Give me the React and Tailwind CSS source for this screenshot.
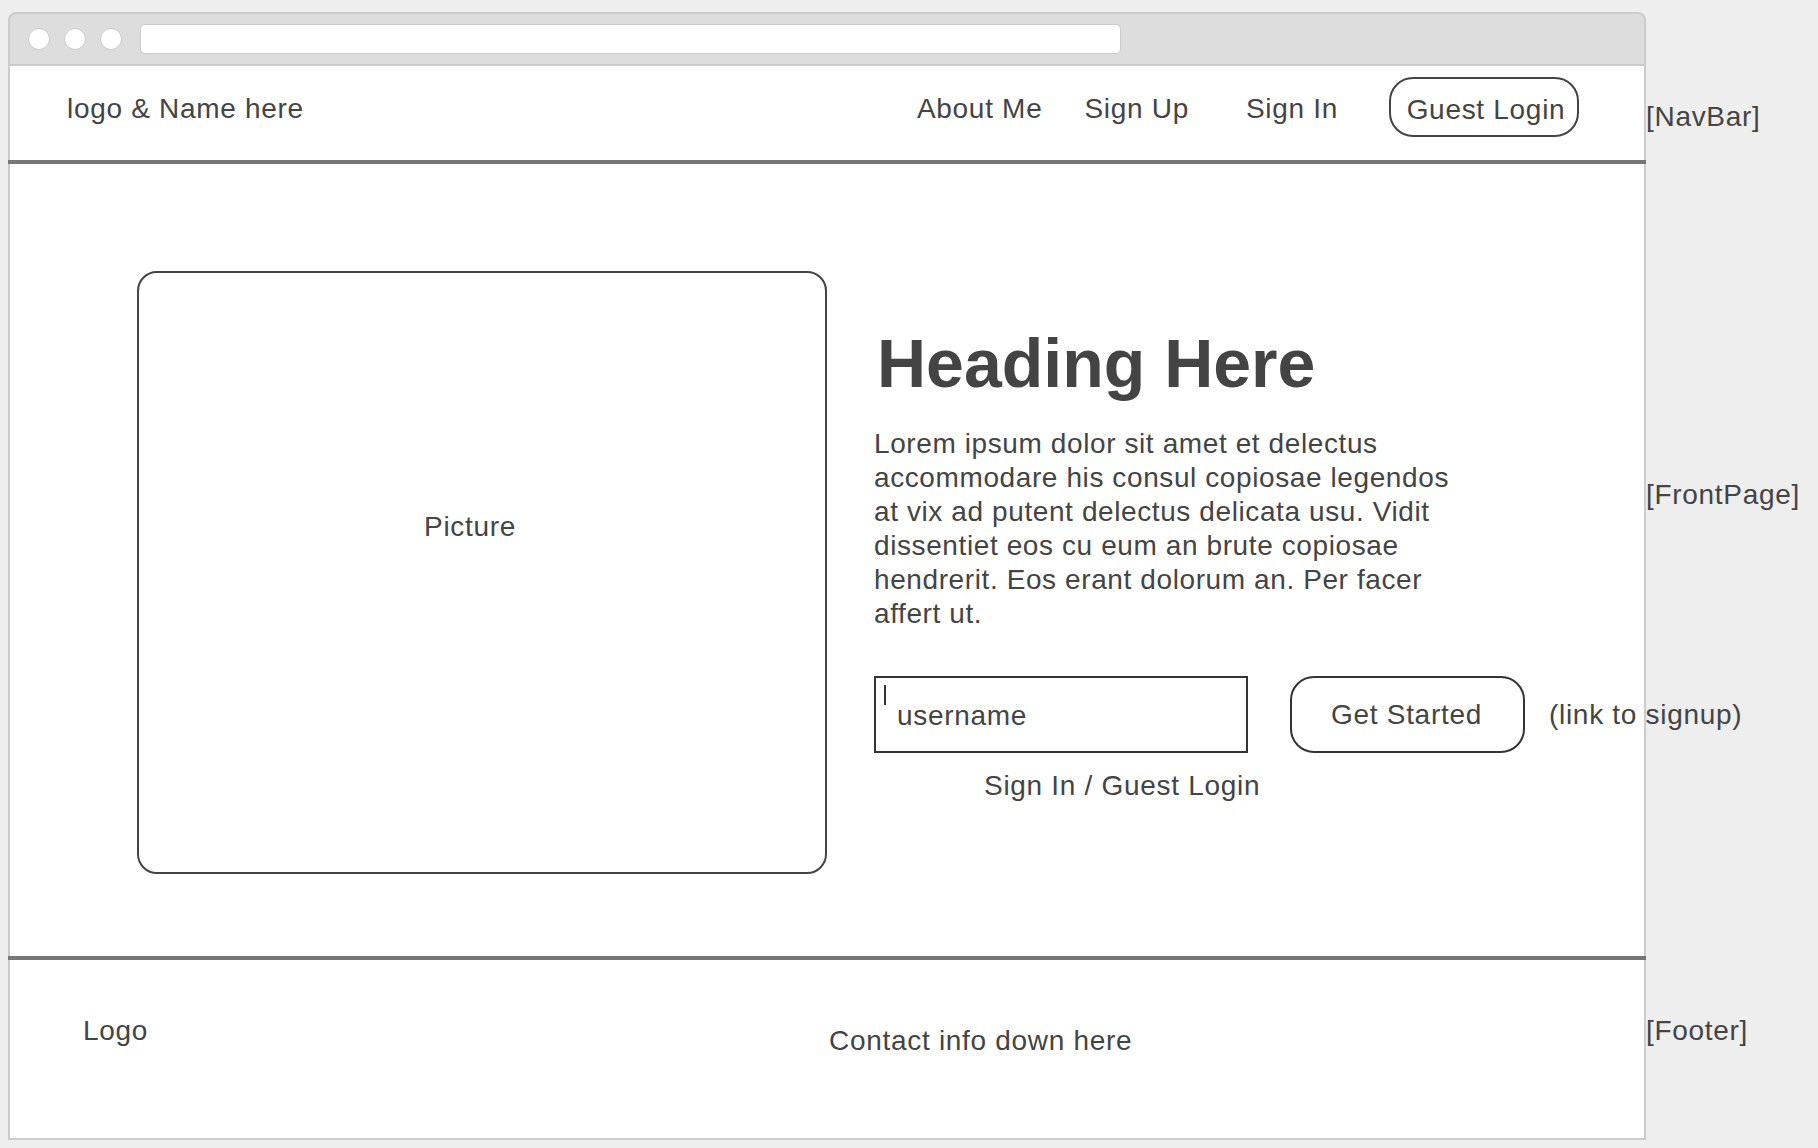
export default function App() {
  return (
    <div className="min-h-[1148px] bg-[#eeeeee] pt-[12px] pl-[8px] text-[#444] font-['Liberation_Sans',Arial,sans-serif]">
      <div className="grid grid-cols-[1638px_auto]">
        {/* Browser chrome */}
        <div className="h-[54px] border-2 border-[#cccccc] rounded-t-[8px] bg-[#dddddd] flex items-center pl-[18px]">
          <div className="w-[22px] h-[22px] rounded-full bg-white border border-[#cccccc]" />
          <div className="w-[22px] h-[22px] rounded-full bg-white border border-[#cccccc] ml-[14px]" />
          <div className="w-[22px] h-[22px] rounded-full bg-white border border-[#cccccc] ml-[14px]" />
          <div className="w-[981px] h-[30px] rounded-[5px] bg-white border border-[#cccccc] ml-[18px]" />
        </div>
        <div />

        {/* NavBar */}
        <div className="h-[94px] border-x-2 border-[#cccccc] bg-white flex items-start">
          <span className="ml-[57px] mt-[29px] text-[28px] leading-none tracking-[0.7px] whitespace-nowrap">
            logo &amp; Name here
          </span>
          <nav className="ml-auto pr-[65px] flex items-start">
            <a className="mt-[29px] text-[28px] leading-none tracking-[0.7px] whitespace-nowrap">About Me</a>
            <a className="ml-[42px] mt-[29px] text-[28px] leading-none tracking-[0.7px] whitespace-nowrap">Sign Up</a>
            <a className="ml-[57px] mt-[29px] text-[28px] leading-none tracking-[0.7px] whitespace-nowrap">Sign In</a>
            <button className="ml-[51px] mt-[11px] w-[190px] h-[60px] border-2 border-[#444] rounded-[24px] flex items-center justify-center pt-[5px] pl-[4px] text-[28px] leading-none tracking-[0.7px] whitespace-nowrap">
              Guest Login
            </button>
          </nav>
        </div>
        <div className="pt-[37px] text-[28px] leading-none tracking-[0.7px] whitespace-nowrap">[NavBar]</div>

        <div className="h-[4px] bg-[#777777]" />
        <div />

        {/* FrontPage */}
        <div className="h-[792px] border-x-2 border-[#cccccc] bg-white flex items-start">
          <div className="ml-[127px] mt-[107px] w-[690px] h-[603px] shrink-0 border-2 border-[#444] rounded-[20px] pt-[240px] pl-[285px]">
            <span className="text-[28px] leading-none tracking-[0.7px]">Picture</span>
          </div>
          <div className="ml-[47px] mt-[165px] flex flex-col items-start">
            <h1 className="ml-[3px] text-[68px] font-bold leading-none whitespace-nowrap">Heading Here</h1>
            <p className="mt-[30px] w-[590px] text-[28px] leading-[34px] tracking-[0.6px]">
              Lorem ipsum dolor sit amet et delectus accommodare his consul copiosae legendos at vix ad putent
              delectus delicata usu. Vidit dissentiet eos cu eum an brute copiosae hendrerit. Eos erant dolorum
              an. Per facer affert ut.
            </p>
            <div className="mt-[45px] flex items-center">
              <div className="w-[374px] h-[77px] shrink-0 border-2 border-[#333] flex items-start">
                <div className="ml-[8px] mt-[7px] w-[2px] h-[20px] bg-[#333]" />
                <span className="ml-[11px] mt-[24px] text-[28px] leading-none tracking-[0.7px]">username</span>
              </div>
              <button className="ml-[42px] w-[235px] h-[77px] shrink-0 border-2 border-[#333] rounded-[24px] flex items-center justify-center pr-[2px] text-[28px] leading-none tracking-[0.7px] whitespace-nowrap">
                Get Started
              </button>
              <span className="ml-[24px] text-[28px] leading-none tracking-[0.7px] whitespace-nowrap">(link to signup)</span>
            </div>
            <span className="mt-[19px] ml-[110px] text-[28px] leading-none tracking-[0.7px] whitespace-nowrap">
              Sign In / Guest Login
            </span>
          </div>
        </div>
        <div className="pt-[317px] text-[28px] leading-none tracking-[0.7px] whitespace-nowrap">[FrontPage]</div>

        <div className="h-[4px] bg-[#777777]" />
        <div />

        {/* Footer */}
        <div className="h-[180px] border-x-2 border-b-2 border-[#cccccc] bg-white flex items-start">
          <div className="w-[819px] shrink-0 pl-[73px] pt-[57px] text-[28px] leading-none tracking-[0.7px]">Logo</div>
          <div className="pt-[67px] text-[28px] leading-none tracking-[0.7px] whitespace-nowrap">Contact info down here</div>
        </div>
        <div className="pt-[57px] text-[28px] leading-none tracking-[0.7px] whitespace-nowrap">[Footer]</div>
      </div>
    </div>
  )
}
